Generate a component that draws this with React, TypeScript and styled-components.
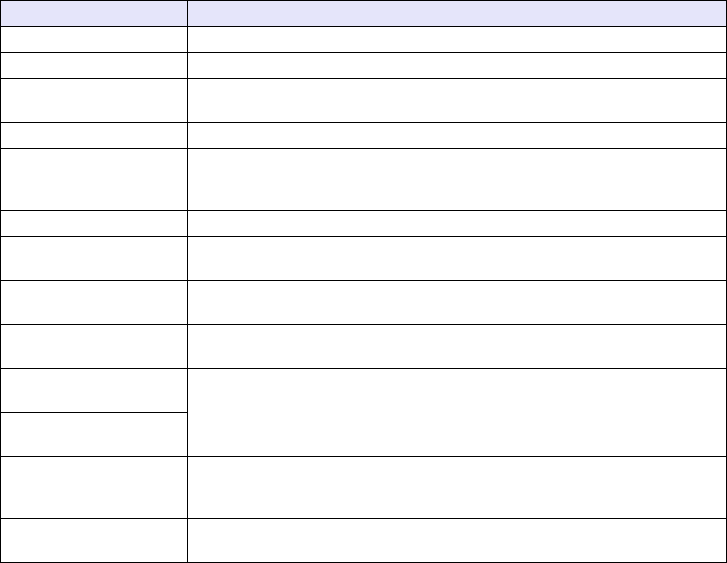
import React from "react";
import styled, { createGlobalStyle } from "styled-components";

const GlobalStyle = createGlobalStyle`
  html, body {
    margin: 0;
    padding: 0;
    background: #ffffff;
    font-family: "Liberation Sans", Arial, sans-serif;
  }
`;

// one line of text = 25px cell, each extra line adds 18px
const rowHeight = (lines: number) => 25 + (lines - 1) * 18;

const rows = [1, 1, 2, 1, 3, 1, 2, 2, 2, 2, 2, 3, 2];

const Grid = styled.div`
  display: grid;
  grid-template-columns: 186px 538px;
  grid-template-rows: ${[1, ...rows].map((l) => `${rowHeight(l)}px`).join(" ")};
  gap: 1px;
  padding: 1px;
  width: 727px;
  box-sizing: border-box;
  background: #000000;
`;

const HeadCell = styled.div`
  background: #e5e5fa;
  font-size: 12px;
  color: #000000;
`;

const Cell = styled.div<{ $span?: number }>`
  background: #ffffff;
  font-size: 12px;
  color: #000000;
  ${(p) => (p.$span ? `grid-row: span ${p.$span};` : "")}
`;

export default function App() {
  return (
    <>
      <GlobalStyle />
      <Grid>
        <HeadCell />
        <HeadCell />
        {rows.map((_, i) => (
          <React.Fragment key={i}>
            <Cell />
            {i === 10 ? null : <Cell $span={i === 9 ? 2 : undefined} />}
          </React.Fragment>
        ))}
      </Grid>
    </>
  );
}
